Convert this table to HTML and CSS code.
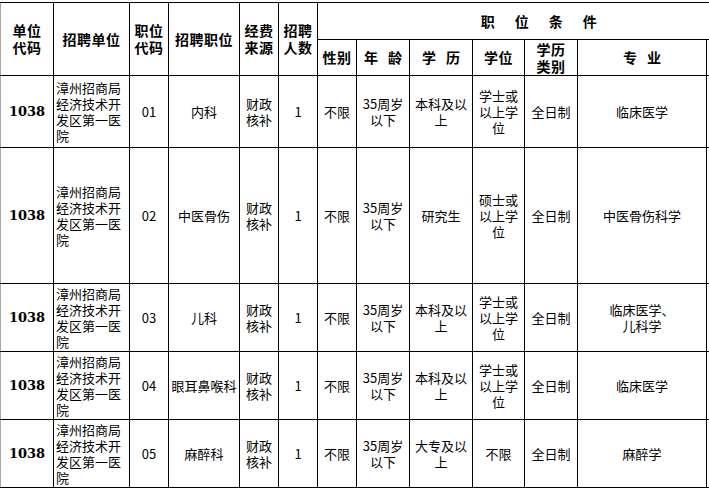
FILE: index.html
```html
<!DOCTYPE html>
<html lang="zh-CN">
<head>
<meta charset="utf-8">
<title>招聘岗位表</title>
<link rel="stylesheet" href="styles.css">
</head>
<body>
<div class="sheet">
<table class="jobs">
  <colgroup>
    <col class="w-code"><col class="w-unit"><col class="w-pcode"><col class="w-post"><col class="w-fund"><col class="w-num">
    <col class="w-sex"><col class="w-age"><col class="w-edu"><col class="w-deg"><col class="w-type"><col class="w-major"><col class="w-extra">
  </colgroup>
  <thead>
    <tr class="h-top">
      <th rowspan="2" class="first">单位<br>代码</th>
      <th rowspan="2">招聘单位</th>
      <th rowspan="2">职位<br>代码</th>
      <th rowspan="2">招聘职位</th>
      <th rowspan="2">经费<br>来源</th>
      <th rowspan="2">招聘<br>人数</th>
      <th colspan="7" class="cond"><span class="wide">职位条件</span></th>
    </tr>
    <tr class="h-sub">
      <th>性别</th>
      <th><span class="spaced">年龄</span></th>
      <th><span class="spaced">学历</span></th>
      <th>学位</th>
      <th>学历<br>类别</th>
      <th><span class="spaced">专业</span></th>
      <th></th>
    </tr>
  </thead>
  <tbody>
    <tr class="r-72">
      <td class="first code">1038</td>
      <td class="unit">漳州招商局经济技术开发区第一医院</td>
      <td>01</td><td>内科</td><td>财政核补</td><td>1</td>
      <td>不限</td><td>35周岁以下</td><td>本科及以上</td><td>学士或以上学位</td><td>全日制</td><td>临床医学</td><td></td>
    </tr>
    <tr class="r-136">
      <td class="first code">1038</td>
      <td class="unit">漳州招商局经济技术开发区第一医院</td>
      <td>02</td><td>中医骨伤</td><td>财政核补</td><td>1</td>
      <td>不限</td><td>35周岁以下</td><td>研究生</td><td>硕士或以上学位</td><td>全日制</td><td>中医骨伤科学</td><td></td>
    </tr>
    <tr class="r-68">
      <td class="first code">1038</td>
      <td class="unit">漳州招商局经济技术开发区第一医院</td>
      <td>03</td><td>儿科</td><td>财政核补</td><td>1</td>
      <td>不限</td><td>35周岁以下</td><td>本科及以上</td><td>学士或以上学位</td><td>全日制</td><td>临床医学、<br>儿科学</td><td></td>
    </tr>
    <tr class="r-68">
      <td class="first code">1038</td>
      <td class="unit">漳州招商局经济技术开发区第一医院</td>
      <td>04</td><td>眼耳鼻喉科</td><td>财政核补</td><td>1</td>
      <td>不限</td><td>35周岁以下</td><td>本科及以上</td><td>学士或以上学位</td><td>全日制</td><td>临床医学</td><td></td>
    </tr>
    <tr class="r-68">
      <td class="first code">1038</td>
      <td class="unit">漳州招商局经济技术开发区第一医院</td>
      <td>05</td><td>麻醉科</td><td>财政核补</td><td>1</td>
      <td>不限</td><td>35周岁以下</td><td>大专及以上</td><td>不限</td><td>全日制</td><td>麻醉学</td><td></td>
    </tr>
  </tbody>
</table>
</div>
</body>
</html>
```
FILE: styles.css
```css
html, body {
  margin: 0;
  padding: 0;
  background: #ffffff;
  overflow: hidden;
}
.sheet {
  padding-top: 2px;
  width: 800px;
}
.jobs {
  border-collapse: collapse;
  table-layout: fixed;
  width: 760px;
  font-family: "Noto Sans CJK SC", sans-serif;
  font-size: 13px;
  color: #000;
}
.w-code { width: 53px; }
.w-unit { width: 76px; }
.w-pcode { width: 39px; }
.w-post { width: 71px; }
.w-fund { width: 39px; }
.w-num { width: 39px; }
.w-sex { width: 39px; }
.w-age { width: 53px; }
.w-edu { width: 63px; }
.w-deg { width: 52px; }
.w-type { width: 53px; }
.w-major { width: 129px; }
.w-extra { width: 53px; }

.jobs th, .jobs td {
  border: 1px solid #000;
  padding: 0 1px;
  text-align: center;
  vertical-align: middle;
}
.jobs th {
  font-weight: bold;
  font-size: 14px;
  line-height: 17px;
  letter-spacing: 0.5px;
}
.jobs td {
  line-height: 16px;
}
.jobs .first {
  border-left: 1px solid #a6a6a6;
}
.jobs th.cond {
  border-right: none;
}
.wide {
  display: inline-block;
  white-space: nowrap;
  letter-spacing: 20px;
  margin-right: -20px;
}
.spaced {
  display: inline-block;
  white-space: nowrap;
  letter-spacing: 10px;
  margin-right: -10px;
}
.jobs td.code {
  font-family: "DejaVu Serif", serif;
  font-weight: bold;
  font-size: 13px;
}
.jobs td.unit {
  text-align: left;
  padding-left: 2px;
}
.h-top { height: 37px; }
.h-sub { height: 36px; }
.r-72 { height: 72px; }
.r-136 { height: 136px; }
.r-68 { height: 68px; }
```
